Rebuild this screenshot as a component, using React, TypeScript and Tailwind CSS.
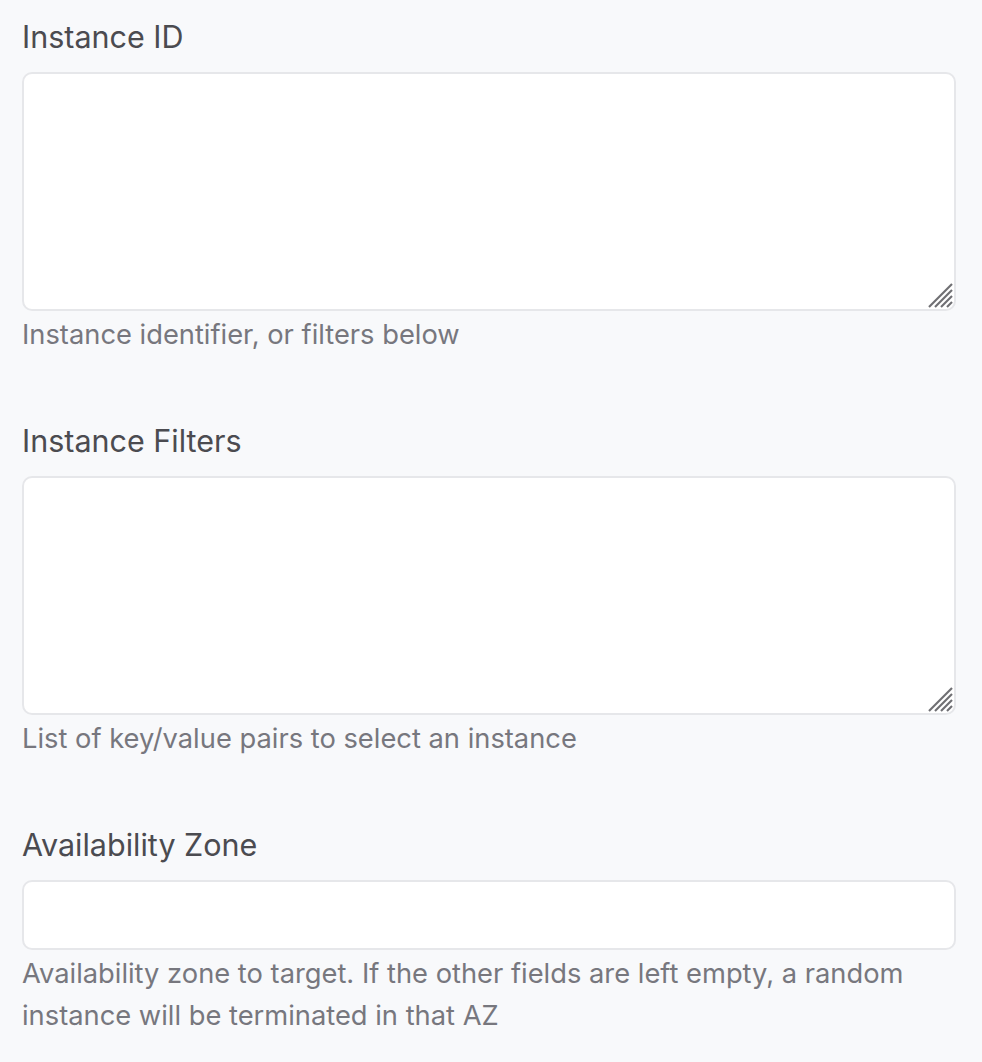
import React from "react";

const font = { fontFamily: 'Inter, "Liberation Sans", Arial, sans-serif' };

function Handle() {
  return (
    <svg
      className="pointer-events-none absolute right-[3px] bottom-[3px]"
      width="25"
      height="25"
      viewBox="0 0 25 25"
    >
      <g stroke="#6f6f73" strokeWidth="2.2" strokeLinecap="butt">
        <line x1="1" y1="24" x2="24" y2="1" />
        <line x1="7" y1="24" x2="24" y2="7" />
        <line x1="13" y1="24" x2="24" y2="13" />
        <line x1="19" y1="24" x2="24" y2="19" />
      </g>
    </svg>
  );
}

function Field({
  label,
  help,
  multiline,
}: {
  label: string;
  help: string;
  multiline?: boolean;
}) {
  return (
    <div className="flex flex-col">
      <label className="text-[30.5px] leading-[48px] text-[#4b4b50]">{label}</label>
      <div className="relative mt-[11px]">
        {multiline ? (
          <textarea
            className="block h-[239px] w-full resize-none rounded-[10px] border-2 border-[#e6e7ea] bg-white outline-none"
          />
        ) : (
          <input className="block h-[70px] w-full rounded-[10px] border-2 border-[#e6e7ea] bg-white outline-none" />
        )}
        {multiline && <Handle />}
      </div>
      <p className="mt-[3px] text-[27.3px] leading-[42px] text-[#77777e]">{help}</p>
    </div>
  );
}

export default function App() {
  return (
    <div className="min-h-[1062px] w-[982px] bg-[#f8f9fb] pl-[22px] pr-[26px] pt-[13px]" style={font}>
      <div className="flex flex-col gap-[61px]">
        <Field label="Instance ID" help="Instance identifier, or filters below" multiline />
        <Field label="Instance Filters" help="List of key/value pairs to select an instance" multiline />
        <Field
          label="Availability Zone"
          help="Availability zone to target. If the other fields are left empty, a random instance will be terminated in that AZ"
        />
      </div>
    </div>
  );
}
